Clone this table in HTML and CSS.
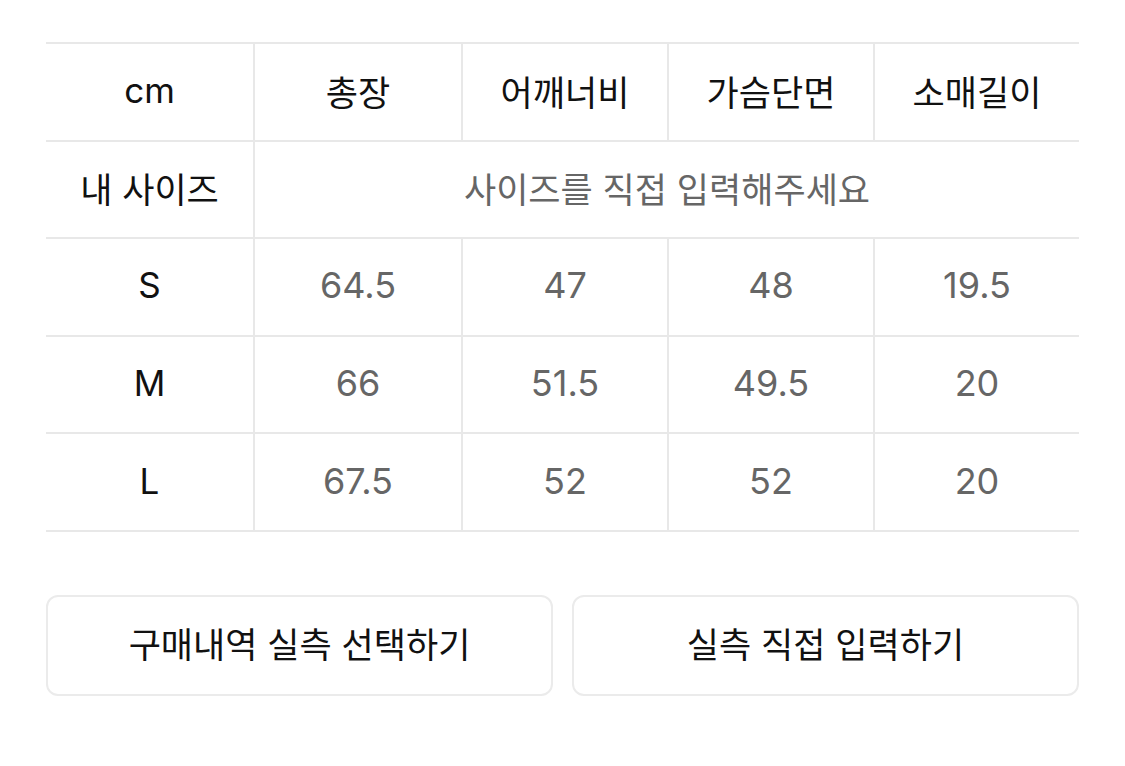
FILE: index.html
```html
<!DOCTYPE html>
<html lang="ko">
<head>
<meta charset="utf-8">
<link rel="stylesheet" href="styles.css">
</head>
<body>
<div class="page">
  <div class="size-table">
    <div class="cell head first">cm</div>
    <div class="cell head">총장</div>
    <div class="cell head">어깨너비</div>
    <div class="cell head">가슴단면</div>
    <div class="cell head">소매길이</div>

    <div class="cell head first">내 사이즈</div>
    <div class="cell span4 hint">사이즈를 직접 입력해주세요</div>

    <div class="cell head first">S</div>
    <div class="cell val">64.5</div>
    <div class="cell val">47</div>
    <div class="cell val">48</div>
    <div class="cell val">19.5</div>

    <div class="cell head first">M</div>
    <div class="cell val">66</div>
    <div class="cell val">51.5</div>
    <div class="cell val">49.5</div>
    <div class="cell val">20</div>

    <div class="cell head first">L</div>
    <div class="cell val">67.5</div>
    <div class="cell val">52</div>
    <div class="cell val">52</div>
    <div class="cell val">20</div>
  </div>

  <div class="actions">
    <button class="btn">구매내역 실측 선택하기</button>
    <button class="btn">실측 직접 입력하기</button>
  </div>
</div>
</body>
</html>
```

FILE: styles.css
```css
html, body {
  margin: 0;
  padding: 0;
  background: #fff;
}

body {
  font-family: "Inter", "Noto Sans CJK KR", sans-serif;
  color: #111;
}

.page {
  padding: 42px 46px 0 46px;
}

.size-table {
  display: grid;
  grid-template-columns: 207px 208px 206px 206px 206px;
  grid-auto-rows: 97.6px;
  border-top: 2px solid #e8e8e8;
}

.cell {
  display: flex;
  align-items: center;
  justify-content: center;
  border-bottom: 2px solid #e8e8e8;
  border-left: 2px solid #e8e8e8;
  font-size: 35px;
  box-sizing: border-box;
  padding-bottom: 3px;
}

.cell.first {
  border-left: none;
}

.head {
  color: #111;
  font-weight: 400;
}

.span4 {
  grid-column: span 4;
}

.hint {
  color: #666;
  font-size: 35px;
}

.val {
  color: #666;
  font-size: 36px;
}

.actions {
  display: flex;
  gap: 19px;
  margin-top: 63px;
}

.btn {
  flex: 1;
  height: 101px;
  border: 2px solid #ebebeb;
  border-radius: 12px;
  background: #fff;
  font-family: "Inter", "Noto Sans CJK KR", sans-serif;
  font-size: 35px;
  font-weight: 400;
  color: #111;
  padding: 0 0 6px 0;
}
```
